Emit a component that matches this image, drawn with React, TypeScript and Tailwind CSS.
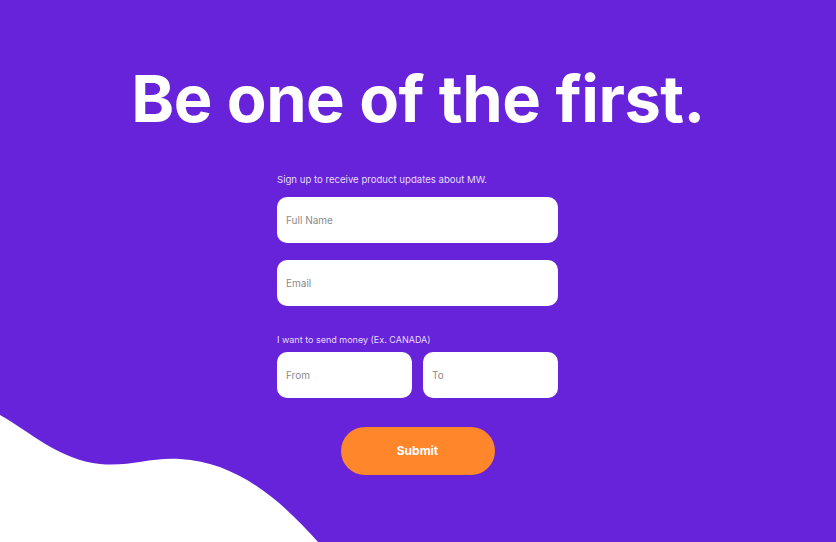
import type { ReactNode } from 'react';

const font = { fontFamily: 'Inter, "Liberation Sans", sans-serif' };

function Field({ placeholder }: { placeholder: string }) {
  return (
    <input
      placeholder={placeholder}
      className="h-[46px] w-full rounded-[10px] bg-white px-[9px] text-[10px] text-gray-700 placeholder:text-[#8a8a8a] outline-none"
    />
  );
}

function Label({ children, className = '' }: { children: ReactNode; className?: string }) {
  return <p className={`leading-none text-[#e6dcfb] ${className}`}>{children}</p>;
}

export default function App() {
  return (
    <div className="relative h-[542px] w-[836px] overflow-hidden bg-[#6723d9]" style={font}>
      {/* wave decoration in the bottom-left corner */}
      <svg className="absolute bottom-0 left-0" width="330" height="130" viewBox="0 412 330 130">
        <path
          d="M0 415 C30 432 60 460 100 464 C130 467 150 457 180 459 C240 462 285 505 318 542 L0 542 Z"
          fill="#ffffff"
        />
      </svg>

      <div className="relative flex flex-col items-center pr-[1px] pt-[64px]">
        <h1 className="pl-[1px] text-[65px] font-bold leading-[70px] tracking-[-0.5px] text-white">
          Be one of the first.
        </h1>

        <form className="mt-[41px] flex w-[281px] flex-col" onSubmit={(e) => e.preventDefault()}>
          <Label className="text-[9.6px]">Sign up to receive product updates about MW.</Label>
          <div className="mt-[12px] flex flex-col gap-[17px]">
            <Field placeholder="Full Name" />
            <Field placeholder="Email" />
          </div>

          <div className="mt-[29px]">
            <Label className="text-[9px]">I want to send money (Ex. CANADA)</Label>
          </div>
          <div className="mt-[8px] grid grid-cols-2 gap-[11px]">
            <Field placeholder="From" />
            <Field placeholder="To" />
          </div>

          <button
            type="submit"
            className="mx-auto mt-[29px] h-[48px] w-[154px] rounded-full bg-[#ff862b] text-[12px] font-bold text-white"
          >
            Submit
          </button>
        </form>
      </div>
    </div>
  );
}
